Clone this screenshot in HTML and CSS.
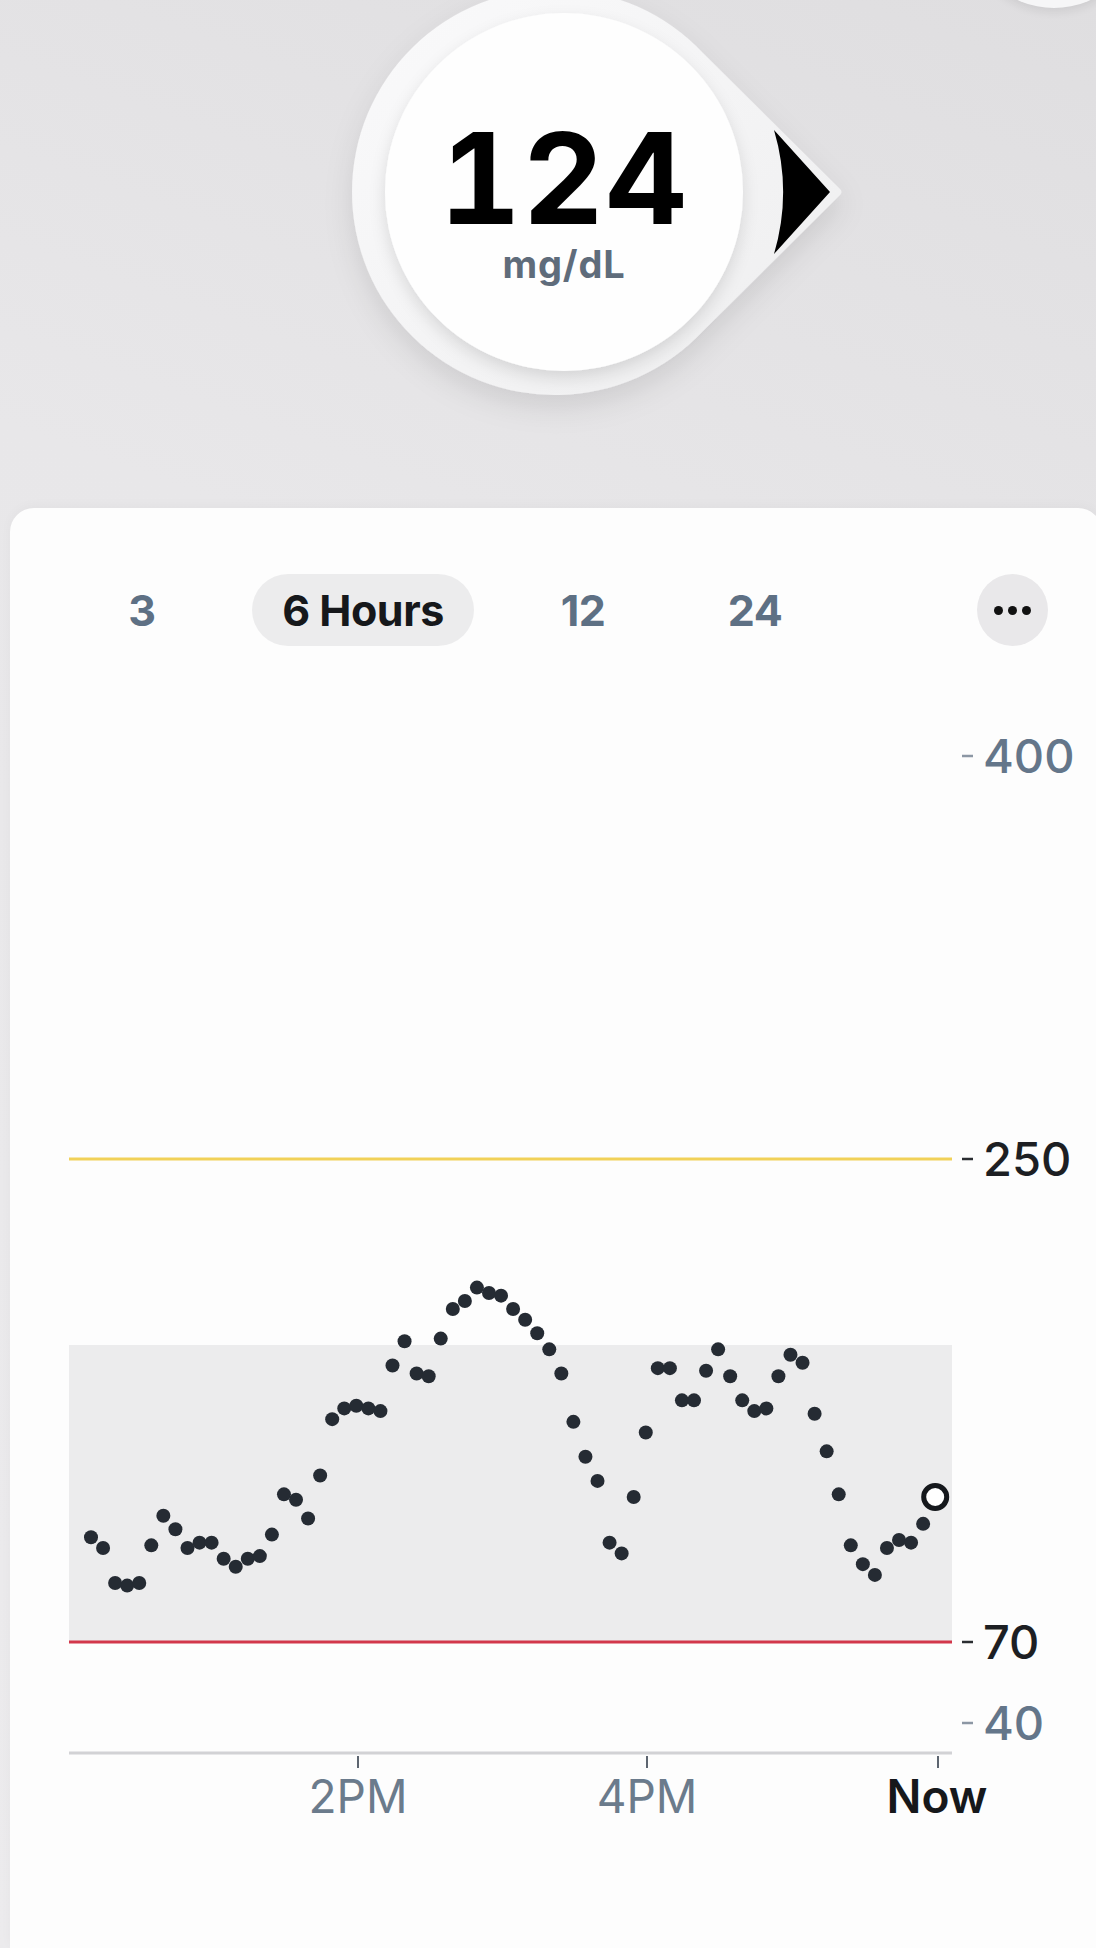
FILE: index.html
```html
<!DOCTYPE html>
<html lang="en">
<head>
  <meta charset="UTF-8" />
  <meta name="viewport" content="width=device-width, initial-scale=1.0"/>
  <title>Glucose</title>
  <link rel="stylesheet" href="styles.css">
</head>
<body>
  <div class="corner-btn"></div>

  <header class="top">
    <div class="gauge">
      <svg class="gauge-shape" width="490" height="410" viewBox="0 0 490 410">
        <defs>
          <linearGradient id="bubbleFill" x1="0" y1="0" x2="1" y2="1">
            <stop offset="0" stop-color="#fafafb"/>
            <stop offset="1" stop-color="#eeeeef"/>
          </linearGradient>
          <filter id="softShadow" x="-30%" y="-30%" width="160%" height="170%">
            <feDropShadow dx="0" dy="12" stdDeviation="14" flood-color="#000" flood-opacity="0.10"/>
          </filter>
          <filter id="innerShadow" x="-20%" y="-20%" width="140%" height="150%">
            <feDropShadow dx="0" dy="7" stdDeviation="8" flood-color="#000" flood-opacity="0.12"/>
          </filter>
        </defs>
        <path d="M342,64 L478,199 Q483,203 478,207 L342,342 A203,203 0 1,1 342,64 Z" fill="url(#bubbleFill)" filter="url(#softShadow)"/>
        <circle cx="203" cy="203" r="179" fill="#fefefe" filter="url(#innerShadow)"/>
        <path d="M413,141 L469,203 L413,265 A219,219 0 0,0 413,141 Z" fill="#000"/>
      </svg>
      <div class="reading">
        <div class="value">124</div>
        <div class="unit">mg/dL</div>
      </div>
    </div>
  </header>

  <main class="card">
    <nav class="ranges">
      <span class="range">3</span>
      <span class="range active">6 Hours</span>
      <span class="range">12</span>
      <span class="range">24</span>
      <span></span>
      <button class="more"><i></i><i></i><i></i></button>
    </nav>

    <svg class="chart" width="1086" height="1140" viewBox="10 700 1086 1140">
      <rect class="target" x="69" y="1345" width="883" height="297"/>
      <line class="high" x1="69" y1="1159" x2="952" y2="1159"/>
      <line class="low" x1="69" y1="1642" x2="952" y2="1642"/>
      <line class="axis" x1="69" y1="1753" x2="952" y2="1753"/>

      <line class="tick" x1="358" y1="1756" x2="358" y2="1768"/>
      <line class="tick" x1="647" y1="1756" x2="647" y2="1768"/>
      <line class="tick" x1="938" y1="1756" x2="938" y2="1768"/>

      <line class="dash" x1="962" y1="756" x2="973" y2="756"/>
      <text class="ylabel" x="983" y="773">400</text>
      <line class="dash dark" x1="962" y1="1159" x2="973" y2="1159"/>
      <text class="ylabel alert" x="983" y="1176">250</text>
      <line class="dash dark" x1="962" y1="1642" x2="973" y2="1642"/>
      <text class="ylabel alert" x="983" y="1659">70</text>
      <line class="dash" x1="962" y1="1723" x2="973" y2="1723"/>
      <text class="ylabel" x="983" y="1740">40</text>

      <text class="xlabel" x="358" y="1813">2PM</text>
      <text class="xlabel" x="647" y="1813">4PM</text>
      <text class="xlabel now" x="937" y="1813">Now</text>

      <g id="readings"></g>
    </svg>
  </main>

  <script>
    // last 6 hours, one reading every 5 minutes (mg/dL)
    const readings = [
      109, 105, 92, 91, 92, 106, 117, 112, 105, 107,
      107, 101, 98, 101, 102, 110, 125, 123, 116, 132,
      153, 157, 158, 157, 156, 173, 182, 170, 169, 183,
      194, 197, 202, 200, 199, 194, 190, 185, 179, 170,
      152, 139, 130, 107, 103, 124, 148, 172, 172, 160,
      160, 171, 179, 169, 160, 156, 157, 169, 177, 174,
      155, 141, 125, 106, 99, 95, 105, 108, 107, 114,
      124
    ];

    const group = document.getElementById('readings');
    const toY = v => 1642 - (v - 70) * 2.685;

    readings.forEach((v, i) => {
      const dot = document.createElementNS('http://www.w3.org/2000/svg', 'circle');
      dot.setAttribute('cx', 91 + i * 12.06);
      dot.setAttribute('cy', toY(v));
      if (i === readings.length - 1) {
        dot.setAttribute('r', 11.5);
        dot.setAttribute('class', 'latest');
      } else {
        dot.setAttribute('r', 7);
        dot.setAttribute('class', 'point');
      }
      group.appendChild(dot);
    });
  </script>
</body>
</html>
```

FILE: styles.css
```css
:root {
  --card-bg: #fdfdfd;
  --slate: #5e7084;
  --ink: #16181b;
  --dot: #252b33;
  --range-bg: #ececed;
  --high: #f1d158;
  --low: #d2374b;
}

body {
  margin: 0;
  height: 1948px;
  overflow: hidden;
  position: relative;
  font-family: Inter, "Noto Sans", sans-serif;
  background: linear-gradient(200deg, #dfdee0 0%, #e8e7e9 35%, #ecebed 100%);
  color: var(--ink);
}

.corner-btn {
  position: absolute;
  left: 967px;
  top: -166px;
  width: 174px;
  height: 174px;
  border-radius: 50%;
  background: #f6f6f7;
  box-shadow: 0 4px 10px rgba(0, 0, 0, 0.08);
}

.top {
  display: flex;
  height: 508px;
}

.gauge {
  position: relative;
  margin: -11px 0 0 361px;
  width: 406px;
  height: 406px;
}

.gauge-shape {
  position: absolute;
  left: 0;
  top: 0;
  overflow: visible;
}

.reading {
  position: relative;
  padding-top: 126px;
  width: 406px;
  text-align: center;
}

.value {
  font-size: 126px;
  font-weight: 700;
  line-height: 1;
  font-variant-numeric: tabular-nums;
  letter-spacing: 1.5px;
  color: #000;
}

.unit {
  margin-top: 4px;
  font-size: 38px;
  font-weight: 700;
  line-height: 1;
  letter-spacing: 0.8px;
  color: #5f6c7b;
}

/* Chart card */
.card {
  margin-left: 10px;
  width: 1092px;
  height: 1440px;
  background: var(--card-bg);
  border-radius: 24px 24px 0 0;
  box-shadow: 0 -2px 12px rgba(0, 0, 0, 0.03);
}

.ranges {
  display: grid;
  grid-template-columns: 220px 222px 218px 126px 1fr 71px;
  align-items: center;
  justify-items: center;
  height: 72px;
  padding: 66px 54px 0 22px;
}

.range {
  font-size: 43px;
  font-weight: 700;
  letter-spacing: -0.5px;
  color: var(--slate);
}

.range.active {
  width: 100%;
  height: 72px;
  border-radius: 36px;
  background: var(--range-bg);
  color: var(--ink);
  display: flex;
  align-items: center;
  justify-content: center;
}

.more {
  width: 71px;
  height: 72px;
  padding: 0;
  border: none;
  border-radius: 50%;
  background: #e9e8ea;
  display: flex;
  gap: 5px;
  align-items: center;
  justify-content: center;
}

.more i {
  width: 9px;
  height: 9px;
  border-radius: 50%;
  background: #111;
}

.chart {
  display: block;
  margin-top: 54px;
}

.target {
  fill: #ececed;
}

.high {
  stroke: var(--high);
  stroke-width: 3;
}

.low {
  stroke: var(--low);
  stroke-width: 3;
}

.axis {
  stroke: #d2d2d5;
  stroke-width: 3;
}

.tick {
  stroke: #5d6570;
  stroke-width: 2;
}

.dash {
  stroke: #8c97a4;
  stroke-width: 2.5;
}

.dash.dark {
  stroke: #2a2d31;
}

.ylabel {
  font-size: 47px;
  font-weight: 500;
  fill: #64768a;
}

.ylabel.alert {
  fill: #1d1f23;
}

.xlabel {
  font-size: 46px;
  font-weight: 400;
  fill: #6b7b8c;
  text-anchor: middle;
}

.xlabel.now {
  font-weight: 600;
  fill: var(--ink);
}

.point {
  fill: var(--dot);
}

.latest {
  fill: #fff;
  stroke: #15181c;
  stroke-width: 5;
}
```
